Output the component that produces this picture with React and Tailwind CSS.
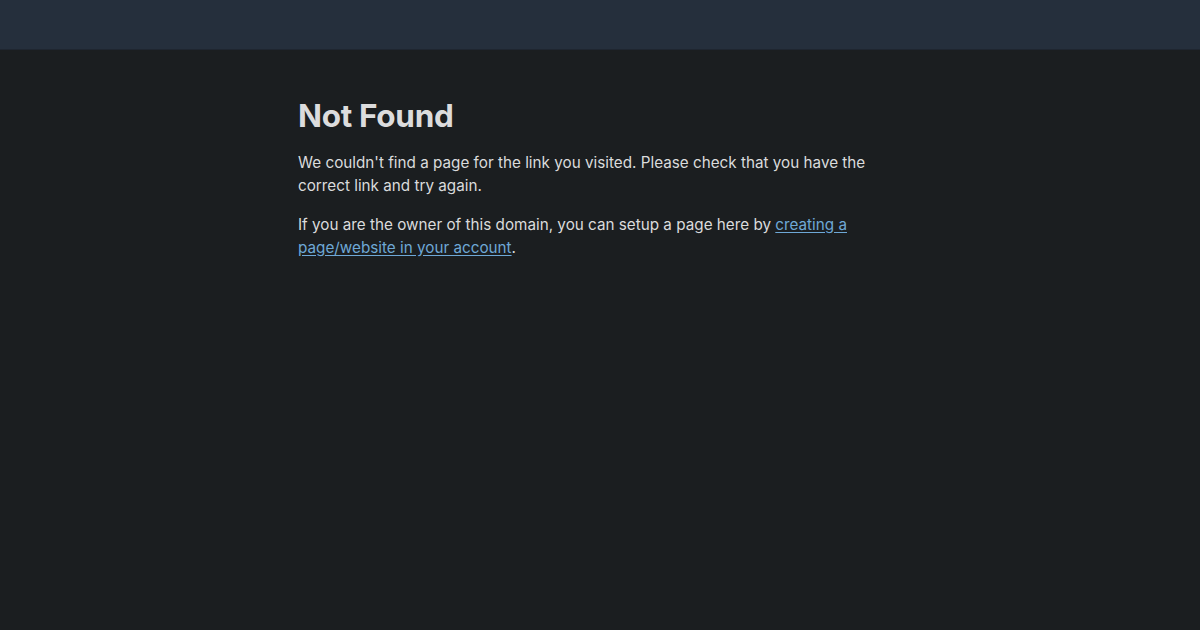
import React from 'react';

const App = () => {
  return (
    <div className="min-h-screen bg-[#1b1e20] text-[#dadbdc]" style={{ fontFamily: 'Inter, "Noto Sans", sans-serif' }}>
      {/* Top bar */}
      <header className="h-[50px] bg-[#252f3c] border-b border-[#1f2630]"></header>

      {/* Message */}
      <main className="w-[604px] mx-auto pt-[46px]">
        <h1 className="text-[31.5px] leading-[40px] font-bold text-[#dcdcdd] tracking-[-0.01em]">Not Found</h1>
        <p className="mt-[15px] text-[15.25px] leading-[23px]">
          We couldn't find a page for the link you visited. Please check that you have the correct link and try again.
        </p>
        <p className="mt-[16px] text-[15.25px] leading-[23px]">
          If you are the owner of this domain, you can setup a page here by{' '}
          <a href="#" className="text-[#6ea8d6] underline underline-offset-2">creating a page/website in your account</a>.
        </p>
      </main>
    </div>
  );
};

export default App;
